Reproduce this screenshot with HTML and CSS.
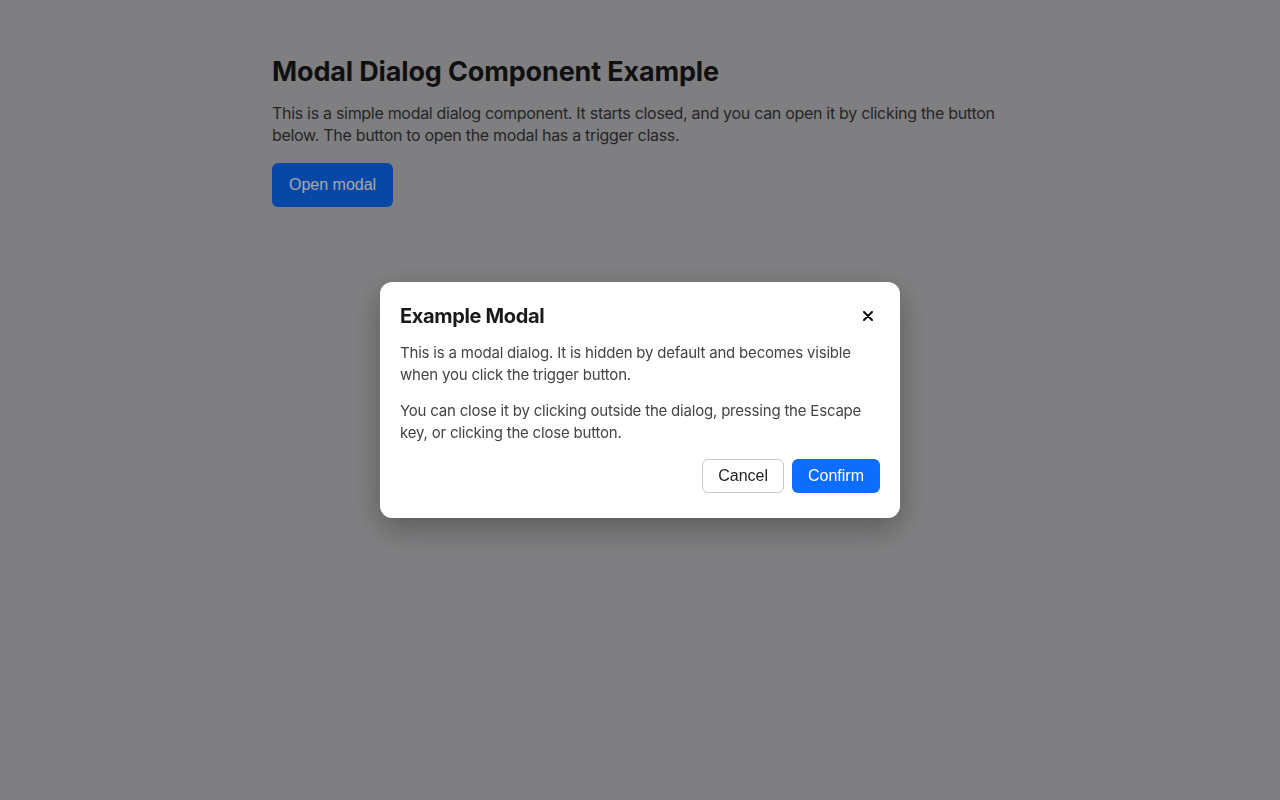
FILE: index.html
```html
<!DOCTYPE html>
<html lang="en">
<head>
<meta charset="utf-8">
<title>Modal Dialog Component Example</title>
<link rel="stylesheet" href="styles.css">
</head>
<body>
<main class="page">
  <h1 class="page-title">Modal Dialog Component Example</h1>
  <p class="page-text">This is a simple modal dialog component. It starts closed, and you can open it by clicking the button below. The button to open the modal has a trigger class.</p>
  <button class="btn btn-primary btn-lg trigger">Open modal</button>
</main>
<div class="overlay">
  <div class="modal" role="dialog" aria-labelledby="modal-title">
    <div class="modal-header">
      <h2 class="modal-title" id="modal-title">Example Modal</h2>
      <button class="close" aria-label="Close">
        <svg width="10" height="10" viewBox="0 0 10 10"><path d="M1 1L9 9M9 1L1 9" stroke="#111" stroke-width="2" stroke-linecap="round"/></svg>
      </button>
    </div>
    <div class="modal-body">
      <p>This is a modal dialog. It is hidden by default and becomes visible when you click the trigger button.</p>
      <p>You can close it by clicking outside the dialog, pressing the Escape key, or clicking the close button.</p>
    </div>
    <div class="modal-footer">
      <button class="btn btn-outline">Cancel</button>
      <button class="btn btn-primary">Confirm</button>
    </div>
  </div>
</div>
</body>
</html>
```
FILE: styles.css
```css
html, body {
  margin: 0;
  padding: 0;
  height: 100%;
}
body {
  background: #c4c4c7;
  font-family: Inter, "Noto Sans", "Liberation Sans", sans-serif;
  color: #1a1a1a;
}
.page {
  max-width: 736px;
  margin: 0 auto;
  padding: 55px 0 0;
}
.page-title {
  margin: 0;
  font-size: 27px;
  line-height: 34px;
  font-weight: 700;
  letter-spacing: -0.15px;
  color: #1a1a1a;
}
.page-text {
  margin: 13px 0 17px;
  font-size: 16px;
  line-height: 22px;
  letter-spacing: -0.3px;
  color: #3a3a3a;
}
.btn {
  font-family: "Liberation Sans", Arial, sans-serif;
  font-size: 16px;
  border-radius: 6px;
  border: 1px solid transparent;
  cursor: pointer;
  height: 34px;
  padding: 0 15px;
}
.btn-lg {
  height: 44px;
  padding: 0 16px;
}
.btn-primary {
  background: #0d6efd;
  color: #fff;
}
.btn-outline {
  background: #fff;
  color: #222;
  border-color: #c8c8c8;
}
.overlay {
  position: fixed;
  inset: 0;
  background: rgba(0, 0, 0, 0.35);
  display: flex;
  align-items: center;
  justify-content: center;
}
.modal {
  width: 520px;
  box-sizing: border-box;
  background: #fff;
  border-radius: 12px;
  padding: 20px 20px 25px;
  box-shadow: 0 10px 30px rgba(0, 0, 0, 0.3);
}
.modal-header {
  display: flex;
  align-items: center;
  justify-content: space-between;
  height: 28px;
}
.modal-title {
  margin: 0;
  font-size: 20px;
  line-height: 28px;
  font-weight: 700;
  color: #1a1a1a;
  letter-spacing: -0.35px;
}
.close {
  background: none;
  border: 0;
  padding: 0;
  width: 24px;
  height: 24px;
  display: flex;
  align-items: center;
  justify-content: center;
  cursor: pointer;
}
.modal-body {
  padding-top: 12px;
}
.modal-body p {
  margin: 0 0 14px;
  font-size: 15px;
  line-height: 22px;
  letter-spacing: -0.2px;
  color: #444;
}
.modal-body p:last-child {
  margin-bottom: 0;
}
.modal-footer {
  display: flex;
  justify-content: flex-end;
  gap: 8px;
  padding-top: 15px;
}
```
